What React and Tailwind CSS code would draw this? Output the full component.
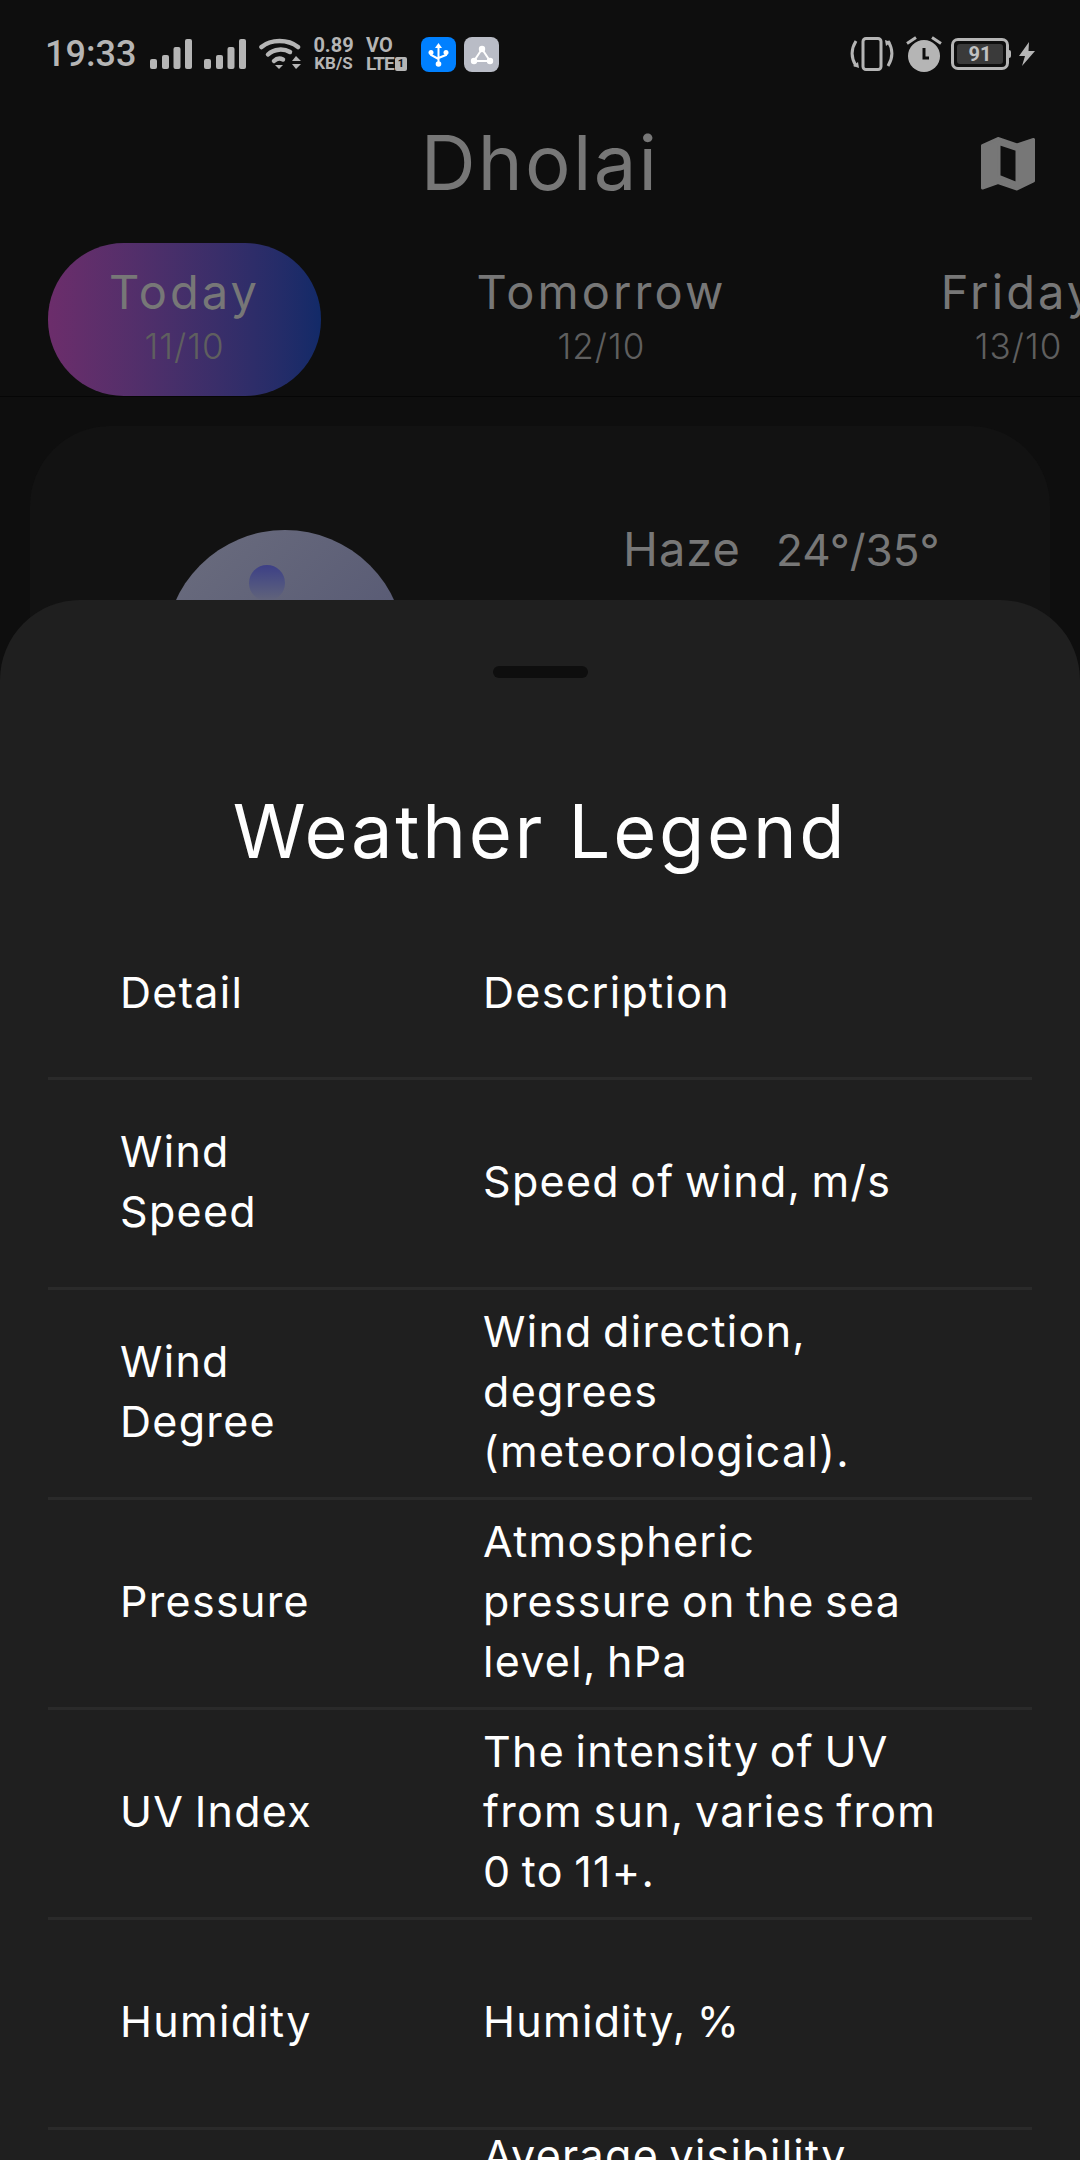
const rows = [
  { detail: ['Wind', 'Speed'], desc: ['Speed of wind, m/s'] },
  { detail: ['Wind', 'Degree'], desc: ['Wind direction,', 'degrees', '(meteorological).'] },
  { detail: ['Pressure'], desc: ['Atmospheric', 'pressure on the sea', 'level, hPa'] },
  { detail: ['UV Index'], desc: ['The intensity of UV', 'from sun, varies from', '0 to 11+.'] },
  { detail: ['Humidity'], desc: ['Humidity, %'] },
];

function Signal() {
  return (
    <svg width="42" height="30" viewBox="0 0 42 30" fill="#b5b5b5">
      <rect x="0" y="20" width="7" height="10" rx="2" />
      <rect x="12" y="16" width="7" height="14" rx="2" />
      <rect x="23.500" y="8" width="7" height="22" rx="2" />
      <rect x="35" y="0" width="7" height="30" rx="2" />
    </svg>
  );
}

function Wifi() {
  return (
    <svg width="42" height="32" viewBox="0 0 42 32" fill="none" stroke="#b5b5b5" strokeWidth="4.5" strokeLinecap="round">
      <path d="M2.500 9C12 1 29 1 39 9" />
      <path d="M9 16.500C15 10.500 25 10.500 31 14" />
      <path d="M15 23C18 20 21 20 24 21.500" />
      <path d="M16 27h8l-4 4z" fill="#b5b5b5" stroke="none" />
      <path d="M33 23l4-5 5 5zM33 26l4 5 5-5z" fill="#b5b5b5" stroke="none" />
    </svg>
  );
}

function Usb() {
  return (
    <svg width="35" height="35" viewBox="0 0 35 35" fill="none" stroke="#fff" strokeWidth="2">
      <rect width="35" height="35" rx="8" fill="#0080ff" stroke="none" />
      <path d="M17.500 9v18M10 15v3l7.500 4M25 15v3l-7.500 3" />
      <path d="M14 11l3.500-5 3.500 5z" fill="#fff" stroke="none" />
      <circle cx="10" cy="15.500" r="2.500" fill="#fff" stroke="none" />
      <circle cx="25" cy="15.500" r="2.500" fill="#fff" stroke="none" />
      <circle cx="17.500" cy="27" r="2.800" fill="#fff" stroke="none" />
    </svg>
  );
}

function Share() {
  return (
    <svg width="35" height="35" viewBox="0 0 35 35" fill="none" stroke="#fff" strokeWidth="2">
      <rect width="35" height="35" rx="8" fill="#b9bcc6" stroke="none" />
      <path d="M18 12L10 24H26Z" />
      <circle cx="18" cy="12" r="3.200" fill="#fff" stroke="none" />
      <circle cx="10" cy="24" r="3.200" fill="#fff" stroke="none" />
      <circle cx="26" cy="24" r="3.200" fill="#fff" stroke="none" />
    </svg>
  );
}

function Vibrate() {
  return (
    <svg width="44" height="34" viewBox="0 0 44 34" fill="none" stroke="#b5b5b5" strokeWidth="3">
      <rect x="13" y="1.500" width="18" height="31" rx="3" />
      <path d="M6 4C1 12 1 21 6 29" />
      <path d="M38 4C43 12 43 21 38 29" />
      <path d="M3 29l6 2-1-6z" fill="#b5b5b5" stroke="none" />
      <path d="M41 5l-6-2 1 6z" fill="#b5b5b5" stroke="none" />
    </svg>
  );
}

function Alarm() {
  return (
    <svg width="36" height="36" viewBox="0 0 36 36" fill="none">
      <circle cx="18" cy="20" r="16" fill="#b5b5b5" />
      <path d="M1 7.500L10 1.500M35 7.500L26 1.500" stroke="#b5b5b5" strokeWidth="3" />
      <path d="M18 12v10h5" stroke="#0e0e0e" strokeWidth="3" />
    </svg>
  );
}

function Battery() {
  return (
    <div className="flex items-center">
      <div className="flex h-[32px] w-[58px] items-center justify-center rounded-[7px] border-[3px] border-[#b5b5b5] p-[3px]">
        <div className="flex h-full w-full items-center justify-center rounded-[3px] bg-[#3a3a3a] font-['Roboto',sans-serif] text-[20px] leading-none font-bold text-[#c0c0c0]">
          91
        </div>
      </div>
      <div className="h-[8px] w-[2px] rounded-r-full bg-[#b5b5b5]" />
    </div>
  );
}

function Bolt() {
  return (
    <svg width="17" height="24" viewBox="0 0 17 24" fill="#b5b5b5">
      <path d="M10 0L0 14h6L3 24 16 9H9.500z" />
    </svg>
  );
}

function MapIcon() {
  return (
    <svg width="54" height="54" viewBox="0 0 54 54" fill="#777777" stroke="#777777" strokeWidth="3" strokeLinejoin="round">
      <path
        fillRule="evenodd"
        d="M1.500 8.500L17 1.500 36 8 52.500 2.500V44L36 52 17 45.500 1.500 51ZM18 6.700V39.300L36 46.700V12.700Z"
      />
    </svg>
  );
}

function Tab({ name, date, active }) {
  return (
    <div
      className={`flex h-[153px] w-[273px] shrink-0 flex-col items-center rounded-[76px] pt-[18px] ${
        active ? 'bg-gradient-to-r from-[#6c2d6b] to-[#122a68]' : ''
      }`}
    >
      <span className="text-[47px] leading-[62px] tracking-[3.1px] whitespace-nowrap text-[#777777]">{name}</span>
      <span className="text-[35px] leading-[46px] font-light tracking-[1px] text-[#5f5f5f]">{date}</span>
    </div>
  );
}

function LegendRow({ detail, desc, height }) {
  return (
    <div className={`grid grid-cols-[363px_1fr] items-center border-b-[3px] border-[#2a2a2a] pb-[5px] pl-[72px] ${height}`}>
      <div className="text-[43px] leading-[60px] tracking-[1.3px] [word-spacing:-3px] text-white">
        {detail.map((line) => (
          <div key={line}>{line}</div>
        ))}
      </div>
      <div className="text-[43px] leading-[60px] tracking-[1.3px] [word-spacing:-3px] text-white">
        {desc.map((line) => (
          <div key={line} className="whitespace-nowrap">{line}</div>
        ))}
      </div>
    </div>
  );
}

export default function App() {
  return (
    <div className="relative h-[2160px] w-[1080px] overflow-hidden bg-[#0e0e0e] font-['Inter',sans-serif]">
      {/* status bar */}
      <div className="flex h-[108px] items-center justify-between pr-[44px] pl-[45px]">
        <div className="flex items-center">
          <span className="w-[90px] font-['Roboto',sans-serif] text-[36px] font-medium text-[#b5b5b5]">19:33</span>
          <div className="ml-[15px] flex items-center gap-[12px]">
            <Signal />
            <Signal />
          </div>
          <div className="ml-[13px]">
            <Wifi />
          </div>
          <div className="ml-[12px] flex w-[41px] flex-col items-center font-['Roboto',sans-serif] font-bold text-[#b5b5b5]">
            <span className="text-[20px] leading-[19px]">0.89</span>
            <span className="text-[17px] leading-[17px]">KB/S</span>
          </div>
          <div className="ml-[12px] flex w-[41px] flex-col font-['Roboto',sans-serif] font-bold text-[#b5b5b5]">
            <span className="text-[20px] leading-[19px]">VO</span>
            <div className="flex items-center gap-[1px]">
              <span className="text-[19px] leading-[18px] tracking-[-1px]">LTE</span>
              <span className="rounded-[2px] bg-[#b5b5b5] px-[3px] text-[11px] leading-[14px] text-[#0e0e0e]">1</span>
            </div>
          </div>
          <div className="ml-[14px] flex gap-[8px]">
            <Usb />
            <Share />
          </div>
        </div>
        <div className="flex items-center">
          <Vibrate />
          <div className="ml-[12px]">
            <Alarm />
          </div>
          <div className="ml-[9px]">
            <Battery />
          </div>
          <div className="ml-[8px]">
            <Bolt />
          </div>
        </div>
      </div>

      {/* header */}
      <div className="relative flex h-[108px] items-center justify-center">
        <span className="text-[76px] tracking-[2.300px] text-[#777777]">Dholai</span>
        <div className="absolute top-[29px] right-[45px]">
          <MapIcon />
        </div>
      </div>

      {/* day tabs */}
      <div className="mt-[27px] flex h-[154px] gap-[144px] border-b border-[#060606] pl-[48px]">
        <Tab name="Today" date="11/10" active />
        <Tab name="Tomorrow" date="12/10" />
        <Tab name="Friday" date="13/10" />
      </div>

      {/* today card, mostly behind the sheet */}
      <div className="mx-[30px] mt-[29px] flex h-[400px] rounded-[80px] bg-[#121212]">
        <div className="relative mt-[104px] ml-[135px] h-[240px] w-[240px] rounded-full bg-gradient-to-br from-[#6b6d7e] to-[#505270]">
          <div className="absolute top-[35px] left-[84px] h-[36px] w-[36px] rounded-full bg-gradient-to-b from-[#3d3f86] to-[#62647a]" />
        </div>
        <div className="mt-[88px] ml-[218px] flex h-[64px] items-baseline text-[#777777]">
          <span className="text-[47px] tracking-[1px]">Haze</span>
          <span className="ml-[35px] text-[44px]">24°/35°</span>
        </div>
      </div>

      {/* legend sheet */}
      <div className="absolute top-[600px] right-0 left-0 h-[1600px] rounded-t-[80px] bg-[#1f1f1f] px-[48px]">
        <div className="mx-auto mt-[66px] h-[12px] w-[95px] rounded-full bg-[#0e0e0e]" />
        <h1 className="mt-[111px] text-center text-[74px] leading-[84px] font-normal tracking-[2.700px] text-white">Weather Legend</h1>
        <div className="mt-[39px]">
          <LegendRow detail={['Detail']} desc={['Description']} height="h-[168px]" />
          {rows.map((row) => (
            <LegendRow key={row.detail.join(' ')} detail={row.detail} desc={row.desc} height="h-[210px]" />
          ))}
          <div className="-mt-[5px] pl-[435px] text-[43px] leading-[60px] tracking-[1.3px] [word-spacing:-3px] text-white">Average visibility</div>
        </div>
      </div>
    </div>
  );
}
